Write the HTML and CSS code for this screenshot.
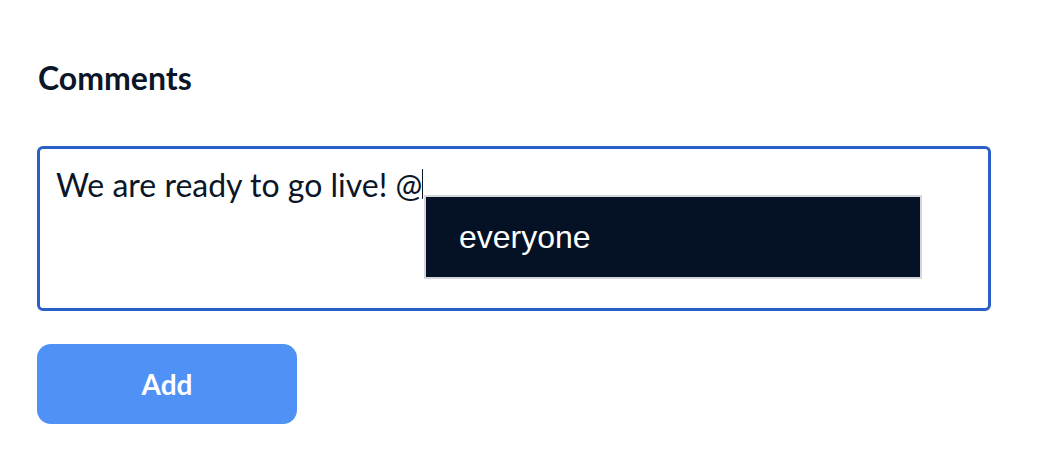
FILE: index.html
```html
<!DOCTYPE html>
<html>
<head>
<meta charset="utf-8">
<link rel="stylesheet" href="styles.css">
</head>
<body>
<main class="panel">
  <h2 class="title">Comments</h2>
  <div class="editor">
    <div class="editor-text">We are ready to go live! @<span class="caret"></span></div>
    <ul class="mention-menu">
      <li class="mention-item">everyone</li>
    </ul>
  </div>
  <button class="add-btn" type="button">Add</button>
</main>
</body>
</html>
```
FILE: styles.css
```css
html, body {
  margin: 0;
  padding: 0;
  background: #ffffff;
}
.panel {
  padding: 58px 51px 0 37px;
  font-family: Lato, "Open Sans", sans-serif;
  color: #0b1628;
}
.title {
  margin: 0 0 0 1px;
  font-size: 32px;
  font-weight: 700;
  line-height: 40px;
}
.editor {
  position: relative;
  margin-top: 48px;
  border: 3px solid #2a5fc8;
  border-radius: 6px;
  padding: 16px 16px 0 16px;
  box-sizing: border-box;
  height: 165px;
}
.editor-text {
  font-size: 32px;
  line-height: 40px;
}
.caret {
  display: inline-block;
  width: 1px;
  height: 30px;
  background: #0b1628;
  vertical-align: -2px;
}
.mention-menu {
  position: absolute;
  left: 384px;
  top: 46px;
  width: 498px;
  margin: 0;
  padding: 0;
  list-style: none;
  background: #051124;
  border: 2px solid #d3d6da;
  box-sizing: border-box;
}
.mention-item {
  height: 80px;
  line-height: 80px;
  padding-left: 33px;
  color: #ffffff;
  font-family: "Liberation Sans", Arial, sans-serif;
  font-size: 32px;
}
.add-btn {
  display: block;
  margin-top: 33px;
  width: 260px;
  height: 80px;
  border: none;
  border-radius: 14px;
  background: #4f91f5;
  color: #ffffff;
  font-family: Lato, sans-serif;
  font-weight: 700;
  font-size: 28px;
  cursor: pointer;
}
```
